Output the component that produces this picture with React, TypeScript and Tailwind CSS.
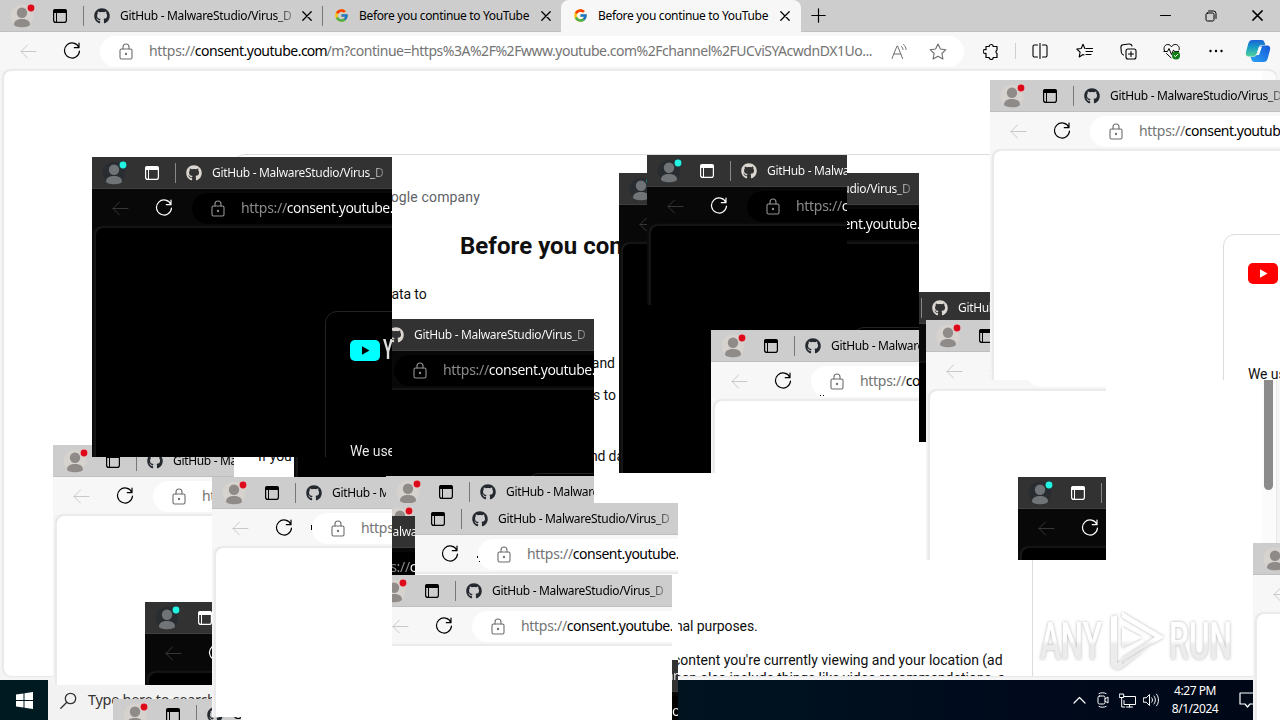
import type { ReactNode } from "react";
import { FcGoogle } from "react-icons/fc";
import { FaGithub } from "react-icons/fa";

const line = { fill: "none", stroke: "currentColor", strokeLinecap: "round", strokeLinejoin: "round" } as const;

function Cell({ w, children, className = "" }: { w: string; children?: ReactNode; className?: string }) {
  return <div className={`flex shrink-0 items-center justify-center ${w} ${className}`}>{children}</div>;
}

function Avatar() {
  return (
    <svg className="shrink-0" width="26" height="28" viewBox="0 0 26 28">
      <circle cx="13" cy="14" r="11.5" fill="#d6d2ce" />
      <circle cx="13" cy="10.7" r="5.2" fill="#8f8b89" />
      <path d="M5 22.3c0-3.600 3.800-5.300 8-5.300s8 1.700 8 5.300c0 2-3.800 3-8 3s-8-1-8-3z" fill="#8f8b89" />
      <circle cx="22" cy="6" r="4.300" fill="#e3c9c6" />
      <circle cx="22" cy="6" r="3.400" fill="#dd0a1c" />
    </svg>
  );
}

function PanelIcon() {
  return (
    <svg width="14" height="14" viewBox="0 0 14 14">
      <rect x=".6" y=".6" width="12.800" height="12.800" rx="2.200" fill="none" stroke="#000" strokeWidth="1.200" />
      <path d="M0 4V2.400A2.400 2.400 0 0 1 2.400 0h9.200A2.400 2.400 0 0 1 14 2.400V4z" fill="#000" />
      <path d="M3.500 4v9.500" stroke="#000" />
    </svg>
  );
}

function Close({ size = 9 }: { size?: number }) {
  return (
    <svg width={size} height={size} viewBox="0 0 10 10" {...line} strokeWidth="1.300">
      <path d="M.8.8l8.400 8.400M9.200.8L.8 9.200" />
    </svg>
  );
}

function Tab({ icon, title, titleWidth, active }: { icon: ReactNode; title: string; titleWidth: string; active?: boolean }) {
  return (
    <div className={`flex h-8 shrink-0 items-center ${active ? "w-[240px] rounded-t-lg bg-[#f7f7f7] pl-[11px]" : "w-[238px] pl-[10px]"}`}>
      <Cell w="w-4">{icon}</Cell>
      <div className={`ml-[10px] shrink-0 overflow-hidden whitespace-nowrap text-[12px] leading-8 text-black ${titleWidth}`}>{title}</div>
      <Cell w="w-[22px]"><Close size={10} /></Cell>
    </div>
  );
}

function TabStrip({ compact }: { compact?: boolean }) {
  return (
    <div className="flex h-8 shrink-0 items-center border-b border-[#bfbfbf] bg-[#cdcdcd]">
      <Cell w="w-[26px]" className="ml-[9px]"><Avatar /></Cell>
      <Cell w="w-[14px]" className="ml-[18px]"><PanelIcon /></Cell>
      <div className="ml-4 h-5 w-px shrink-0 bg-[#777]" />
      <Tab
        icon={<FaGithub size={16} color="#24292f" />}
        title="GitHub - MalwareStudio/Virus_D"
        titleWidth="w-[176px] tracking-[-0.33px] [mask-image:linear-gradient(to_right,black_88%,transparent_102%)]"
      />
      {!compact && (
        <>
          <div className="h-5 w-px shrink-0 bg-[#777]" />
          <Tab icon={<FcGoogle size={15} />} title="Before you continue to YouTube" titleWidth="w-[176px] tracking-[-0.34px]" />
          <Tab active icon={<FcGoogle size={15} />} title="Before you continue to YouTube" titleWidth="w-[176px] tracking-[-0.34px]" />
          <Cell w="w-[35px]">
            <svg width="15" height="15" viewBox="0 0 15 15" {...line} strokeWidth="1.200"><path d="M7.500.8v13.400M.8 7.500h13.400" /></svg>
          </Cell>
          <div className="flex-1" />
          <Cell w="w-[46px]">
            <svg width="11" height="11" viewBox="0 0 11 11" {...line}><path d="M.5 5.500h10" /></svg>
          </Cell>
          <Cell w="w-[46px]">
            <svg width="12" height="12" viewBox="0 0 12 12" {...line}>
              <rect x="1" y="3" width="8" height="8" rx="1.500" /><path d="M3.500 1h5A2.500 2.500 0 0 1 11 3.500v5" />
            </svg>
          </Cell>
          <Cell w="w-[46px]"><Close size={11} /></Cell>
        </>
      )}
    </div>
  );
}

function Copilot() {
  return (
    <svg width="26" height="24" viewBox="0 0 26 24">
      <defs>
        <linearGradient id="cpA" x1="0" y1="0" x2="0" y2="1"><stop offset="0" stopColor="#1b62d6" /><stop offset=".45" stopColor="#189dc8" /><stop offset="1" stopColor="#52d39a" /></linearGradient>
        <linearGradient id="cpB" x1="0" y1="1" x2="1" y2="0"><stop offset="0" stopColor="#2aa4f4" /><stop offset="1" stopColor="#1557d8" /></linearGradient>
      </defs>
      <path d="M18.500 23h-9c-2 0-2.600-1.200-3.200-3l-.7-2.200h3c2 0 3-1.100 3.600-3l1.600-5.100c.8-2.600 1.800-3.200 4-3.200H22c2.800 0 3.700 2 3 4.600l-2.300 8.400c-.7 2.500-2 3.500-4.200 3.500z" fill="url(#cpB)" />
      <path d="M7.500 1h9c2 0 2.600 1.200 3.200 3l.6 2h-3.500c-2 0-2.900 1.300-3.500 3.200l-1.500 5c-.8 2.600-1.800 3.300-4 3.300H4c-2.800 0-3.700-2-3-4.600L3.300 4.500C4 2 5.300 1 7.500 1z" fill="url(#cpA)" />
      <path d="M14.800 7.500h2.200l-3 8.600h-3c.7-.6 1-1.300 1.300-2.200l1.100-4c.3-1.100.7-1.900 1.400-2.400z" fill="#fff" />
    </svg>
  );
}

function Toolbar({ compact }: { compact?: boolean }) {
  return (
    <div className="flex h-[38px] shrink-0 items-center bg-[#f7f7f7] text-black">
      <Cell w="w-[18px]" className="ml-[19px] text-[#c9c9c9]">
        <svg width="17" height="15" viewBox="0 0 17 15" {...line}><path d="M16 7.500H1M7.500 1L1 7.500 7.500 14" /></svg>
      </Cell>
      <Cell w="w-[18px]" className="ml-[26px]">
        <svg width="18" height="18" viewBox="0 0 18 18" {...line} strokeWidth="1.200">
          <path d="M15.900 5.500A7.500 7.500 0 1 0 16.500 9M16 1v4.700h-4.700" />
        </svg>
      </Cell>
      <div className={`ml-[19px] flex h-[31px] shrink-0 items-center rounded-full bg-white ${compact ? "w-[380px]" : "w-[864px]"}`}>
        <Cell w="w-4" className="ml-[18px] text-[#6d6d6d]">
          <svg width="14" height="17" viewBox="0 0 14 17" {...line} strokeWidth="1.100">
            <rect x="1" y="6" width="12" height="10" rx="1.500" /><path d="M4 6V4a3 3 0 0 1 6 0v2" /><circle cx="7" cy="11" r=".6" fill="currentColor" />
          </svg>
        </Cell>
        <div className={`ml-[15px] shrink-0 overflow-hidden whitespace-nowrap text-[14px] leading-[30px] tracking-[-0.3px] text-[#747474] ${compact ? "w-[180px]" : "w-[730px]"}`}>
          https://<span className="tracking-[-0.5px] text-black">consent.youtube.</span><span className="tracking-[-0.9px] text-black">com</span>
          {!compact && <span className="tracking-[-0.47px]">/m?continue=https%3A%2F%2Fwww.youtube.com%2Fchannel%2FUCviSYAcwdnDX1Uo...</span>}
        </div>
        {!compact && (
          <>
            <Cell w="w-5" className="ml-[11px] text-[#6d6d6d]">
              <svg width="18" height="17" viewBox="0 0 18 17" {...line}>
                <path d="M1 15.500L6 3h.6l5 12.500M3 11h6.800M10.500 3.500c1 .9 1.400 1.900 1.500 3M12.500 1.500c1.700 1.400 2.500 3.100 2.600 5" />
              </svg>
            </Cell>
            <Cell w="w-5" className="ml-[18px] text-[#6d6d6d]">
              <svg width="18" height="17" viewBox="0 0 18 17" {...line} strokeWidth="1.100">
                <path d="M9 1l2.400 5 5.500.7-4 3.800 1 5.500L9 13.300 4.100 16l1-5.500-4-3.800 5.500-.7z" />
              </svg>
            </Cell>
          </>
        )}
      </div>
      {!compact && (
        <>
          <Cell w="w-5" className="ml-[17px]">
            <svg width="17" height="17" viewBox="0 0 17 17" {...line} strokeWidth="1.200">
              <path d="M3 3.500h3.200a2 2 0 1 1 4 0H14V7a2 2 0 0 0 0 3.500v4h-3.800a2 2 0 0 1-4 0H3v-4.200a2 2 0 1 1 0-3.600z" />
            </svg>
          </Cell>
          <div className="ml-[14px] h-4 w-px shrink-0 bg-[#d0d0d0]" />
          <Cell w="w-5" className="ml-[14px]">
            <svg width="16" height="16" viewBox="0 0 16 16" {...line} strokeWidth="1.100">
              <path d="M5.500 2H2.500A1.500 1.500 0 0 0 1 3.500v9A1.500 1.500 0 0 0 2.500 14h3M10.500 2h3A1.500 1.500 0 0 1 15 3.500v9a1.500 1.500 0 0 1-1.500 1.500h-3M8 .5v15" />
            </svg>
          </Cell>
          <Cell w="w-5" className="ml-[24px]">
            <svg width="17" height="16" viewBox="0 0 17 16" {...line} strokeWidth="1.100">
              <path d="M8.800 5.500L7 1.200 5.200 5.500.8 6l3.300 3.100L3.200 14 7 11.500l1 .5M10 5.500h6.500M10 8.500h6.500M10 11.500h5" />
            </svg>
          </Cell>
          <Cell w="w-5" className="ml-[24px]">
            <svg width="17" height="17" viewBox="0 0 17 17" {...line} strokeWidth="1.100">
              <rect x="6" y="6" width="10" height="10" rx="2" /><path d="M11 8.500v5M8.500 11h5M3.500 12C2 11.500 1.500 10.500 1.300 9L.9 4.500C.8 3 1.500 2 3 1.800L9 1c1.600-.2 2.600.5 3 2" />
            </svg>
          </Cell>
          <Cell w="w-5" className="ml-[24px]">
            <svg width="18" height="17" viewBox="0 0 18 17" {...line}>
              <path d="M1.500 8C0 4.500 2 1.500 4.800 1.500 7 1.500 8 3 8.500 4c.5-1 1.500-2.500 3.700-2.500C15.500 1.500 17 4.500 16 7M1 8.500h3.500l1.500-3 2.500 6 2-4.500 1 1.500h4M3.500 10.500l4.500 4.300" />
              <circle cx="13" cy="12.500" r="4" fill="#0f7b16" stroke="none" /><path d="M11.200 12.500l1.300 1.200 2.300-2.400" stroke="#fff" />
            </svg>
          </Cell>
          <Cell w="w-5" className="ml-[24px]">
            <svg width="14" height="4" viewBox="0 0 14 4"><circle cx="1.500" cy="2" r="1.200" /><circle cx="7" cy="2" r="1.200" /><circle cx="12.500" cy="2" r="1.200" /></svg>
          </Cell>
          <Cell w="w-[26px]" className="ml-[19px]"><Copilot /></Cell>
        </>
      )}
    </div>
  );
}

const cardText = "whitespace-nowrap text-[14px] leading-5 text-[#0f0f0f]";

function Page({ compact }: { compact?: boolean }) {
  return (
    <div className={`flex h-[610px] shrink-0 bg-[#f5f5f5] pb-1 pl-[3px] ${compact ? "w-[504px]" : "w-full pr-1"}`}>
      <div className="flex flex-1 overflow-hidden rounded-lg border-l border-t border-[#ebebeb] bg-white shadow-[0_0_2px_#c8c8c8]">
        <div className={`ml-[229px] mt-[83px] h-[600px] shrink-0 rounded-t-[12px] border border-[#dadce0] pl-6 font-['Roboto',sans-serif] ${compact ? "w-[360px]" : "w-[800px]"}`}>
          <div className="mt-[28px] flex h-5 items-center">
            <svg width="30" height="21" viewBox="0 0 30 21"><rect width="30" height="21" rx="5" fill="red" /><path d="M12 6.200v8.600l7.500-4.300z" fill="#fff" /></svg>
            <span className="ml-[3px] w-[70px] origin-left scale-x-[0.6] text-[27px] font-bold leading-none tracking-[-1px] text-[#212121]">YouTube</span>
            {!compact && <span className="mt-2 w-[119px] whitespace-nowrap text-right text-[14px] tracking-[0.15px] text-[#5f6368]">a Google company</span>}
          </div>
          {!compact && <h1 className="-ml-6 mt-[25px] text-center text-[24px] font-bold leading-[36px] tracking-[0.04px] text-[#0f0f0f]">Before you continue to YouTube</h1>}
          <p className={`${cardText} tracking-[-0.1px] ${compact ? "mt-[81px]" : "mt-[20px]"}`}>We use cookies and data to</p>
          {!compact && (
            <>
              <p className={`${cardText} mt-[49px] pl-[38px]`}>Track outages and protect against spam, fraud, and abuse</p>
              <p className={`${cardText} mt-[12px] pl-[33px]`}>Measure audience engagement and site statistics to</p>
              <p className={`${cardText} mt-[41px] tracking-[-0.13px]`}>If you choose to “Accept all,” we will also use cookies and data to</p>
              <p className={`${cardText} mt-[150px] tracking-[-0.09px]`}>If you choose to “Reject all,” we will not use cookies for these additional purposes.</p>
              <p className={`${cardText} mt-[14px] tracking-[-0.01px]`}>Non-personalized content and ads are influenced by things like the content you're currently viewing and your location (ad</p>
              <p className={`${cardText} -mt-[2px] tracking-[-0.09px]`}>serving is based on general location). Personalized content and ads can also include things like video recommendations, a</p>
            </>
          )}
        </div>
        {!compact && (
          <div className="ml-auto h-full w-[14px] bg-[#fbfbfb] pl-[2px] pt-[13px]">
            <div className="h-[406px] w-[9px] rounded-full bg-[#8b8b8b]" />
          </div>
        )}
      </div>
    </div>
  );
}

function Taskbar() {
  return (
    <div className="flex h-10 shrink-0 items-center bg-[linear-gradient(90deg,#001820_0%,#00121f_60%,#000a1c_80%,#000817_100%)] text-white">
      <Cell w="w-12" className="h-10 bg-[#001a22]">
        <svg width="17" height="17" viewBox="0 0 17 17" fill="#fff"><path d="M0 2.400l7.500-1V8H0zM8.500 1.300L17 0v8H8.500zM0 9h7.500v6.600L0 14.600zM8.500 9H17v8l-8.500-1.300z" /></svg>
      </Cell>
      <div className="flex h-10 w-[344px] items-center bg-[#f2f2f2] pl-3 text-[#333]">
        <svg width="17" height="17" viewBox="0 0 17 17" {...line} strokeWidth="1.300"><circle cx="10.500" cy="6.500" r="5.200" /><path d="M6.800 10.200L.8 16.200" /></svg>
        <span className="ml-[11px] text-[14.500px] tracking-[-0.3px]">Type here to search</span>
      </div>
      <div className="flex-1" />
      <Cell w="w-[14px]"><svg width="13" height="8" viewBox="0 0 13 8" {...line} strokeWidth="1.200"><path d="M1 7l5.500-5.500L12 7" /></svg></Cell>
      <Cell w="w-3" className="ml-[11px]">
        <svg width="12" height="16" viewBox="0 0 12 16" {...line}><rect x="1" y="4" width="7" height="8" rx="1.500" /><path d="M8 7l3-2v6l-3-2M2 1.500c2-1 5-1 7 0M2 14.500c2 1 5 1 7 0" /></svg>
      </Cell>
      <Cell w="w-[18px]" className="ml-[9px]">
        <svg width="17" height="15" viewBox="0 0 17 15" {...line}><path d="M5 3.500h11.500v8H5v-4M10.500 11.500v2.500M7.500 14h6M.7 1h4v3.500h-4zM2.700 4.500V14h3" /></svg>
      </Cell>
      <Cell w="w-[18px]" className="ml-[6px]">
        <svg width="17" height="14" viewBox="0 0 17 14" {...line}><path d="M.7 4.800h2.500L6.500 1.500v11L3.200 9.200H.7zM8.800 4.800c.9 1.300.9 3.100 0 4.400M11 3c1.800 2.300 1.800 5.700 0 8M13.500 1.200c2.700 3.300 2.700 8.300 0 11.600" /></svg>
      </Cell>
      <div className="ml-[8px] w-[54px] whitespace-nowrap text-center text-[12px] leading-[18px] tracking-[-0.45px]">
        <div>4:27 PM</div>
        <div>8/1/2024</div>
      </div>
      <Cell w="w-[18px]" className="ml-[17px] mr-[23px]">
        <svg width="18" height="17" viewBox="0 0 18 17" {...line} strokeWidth="1.200"><path d="M1 1h16v11h-6l-2.500 3L6 12H1z" /></svg>
      </Cell>
    </div>
  );
}

type PatchProps = { box: string; shift?: string; inverted?: boolean; children?: ReactNode };

function Patch({ box, shift = "", inverted, children }: PatchProps) {
  return (
    <div className={`absolute overflow-hidden ${box} ${inverted ? "invert" : ""}`}>
      <div className={`flex w-[500px] flex-col bg-[#f7f7f7] ${shift}`}>
        <TabStrip compact />
        <Toolbar compact />
        <Page compact />
      </div>
      {children}
    </div>
  );
}

function Watermark() {
  return (
    <svg className="absolute left-[1034px] top-[602px]" width="204" height="76" viewBox="0 0 204 76">
      <defs>
        <linearGradient id="wm" x1="0" y1="0" x2="0" y2="1"><stop offset="0.48" stopColor="#fff" /><stop offset="0.56" stopColor="#ececec" /></linearGradient>
        <filter id="ws" x="-10%" y="-20%" width="120%" height="140%"><feDropShadow dx="0" dy="0" stdDeviation="1.600" floodColor="#777" floodOpacity=".6" /></filter>
      </defs>
      <g filter="url(#ws)" fontFamily="Roboto, sans-serif" fontWeight="500" fontSize="51" fill="url(#wm)">
        <text x="6" y="57" textLength="62" lengthAdjust="spacingAndGlyphs">ANY</text>
        <text x="135" y="57" textLength="63" lengthAdjust="spacingAndGlyphs">RUN</text>
        <path d="M88 10l42 25-42 27V56l33-21-33-19.500zM88 25l20 10.500L88 46zM77 15l6-2v48l38-21-33 26-5 2-6-4z" fillRule="evenodd" />
      </g>
    </svg>
  );
}

export default function App() {
  return (
    <div className="relative flex h-[720px] w-[1280px] flex-col overflow-hidden bg-white font-['Noto_Sans','Open_Sans',sans-serif]">
      <TabStrip />
      <Toolbar />
      <Page />
      <Taskbar />
      <Patch box="left-[294px] top-[319px] h-[158px] w-[300px]" inverted />
      <Patch box="left-[53px] top-[445px] h-[240px] w-[181px]" />
      <Patch box="left-[92px] top-[157px] h-[300px] w-[300px]" inverted />
      <Patch box="left-[145px] top-[602px] h-[83px] w-[67px]" inverted />
      <Patch box="left-[113px] top-[699px] h-[21px] w-[128px]" />
      <Patch box="left-[212px] top-[477px] h-[240px] w-[180px]">
        <div className="absolute left-[99px] top-[48px] h-[5px] w-px bg-black" />
      </Patch>
      <div className="absolute left-[241px] top-[717px] h-[3px] w-[151px] bg-white" />
      <Patch box="left-[386px] top-[476px] h-[27px] w-[208px]" />
      <Patch box="left-[392px] top-[503px] h-[72px] w-[286px]" shift="-ml-[14px]">
        <div className="absolute left-[85px] top-[53px] h-[2px] w-px bg-black" />
        <div className="absolute left-[87px] top-[58px] h-px w-px bg-black" />
      </Patch>
      <Patch box="left-[392px] top-[516px] h-[59px] w-[23px]" shift="-ml-[177px]" inverted />
      <div className="absolute left-[672px] top-[575px] h-[85px] w-[6px] bg-white" />
      <Patch box="left-[672px] top-[660px] h-[60px] w-[6px]" shift="-ml-[201px]" inverted />
      <Patch box="left-[392px] top-[575px] h-[145px] w-[280px]" shift="-ml-[20px]" />
      <Patch box="left-[619px] top-[173px] h-[300px] w-[300px]" inverted />
      <Patch box="left-[647px] top-[155px] h-[150px] w-[200px]" inverted />
      <Patch box="left-[711px] top-[330px] h-[143px] w-[208px]">
        <div className="absolute left-[109px] top-[65px] h-px w-px bg-black" />
        <div className="absolute left-[112px] top-[65px] h-px w-px bg-black" />
      </Patch>
      <Patch box="left-[919px] top-[292px] h-[150px] w-[71px]" shift="-ml-[81px]" inverted />
      <Patch box="left-[926px] top-[320px] h-[240px] w-[180px]" />
      <Patch box="left-[990px] top-[80px] h-[300px] w-[290px]" />
      <Patch box="left-[1018px] top-[477px] h-[83px] w-[88px]" inverted />
      <Patch box="left-[1253px] top-[543px] h-[177px] w-[27px]" />
      <Watermark />
    </div>
  );
}
